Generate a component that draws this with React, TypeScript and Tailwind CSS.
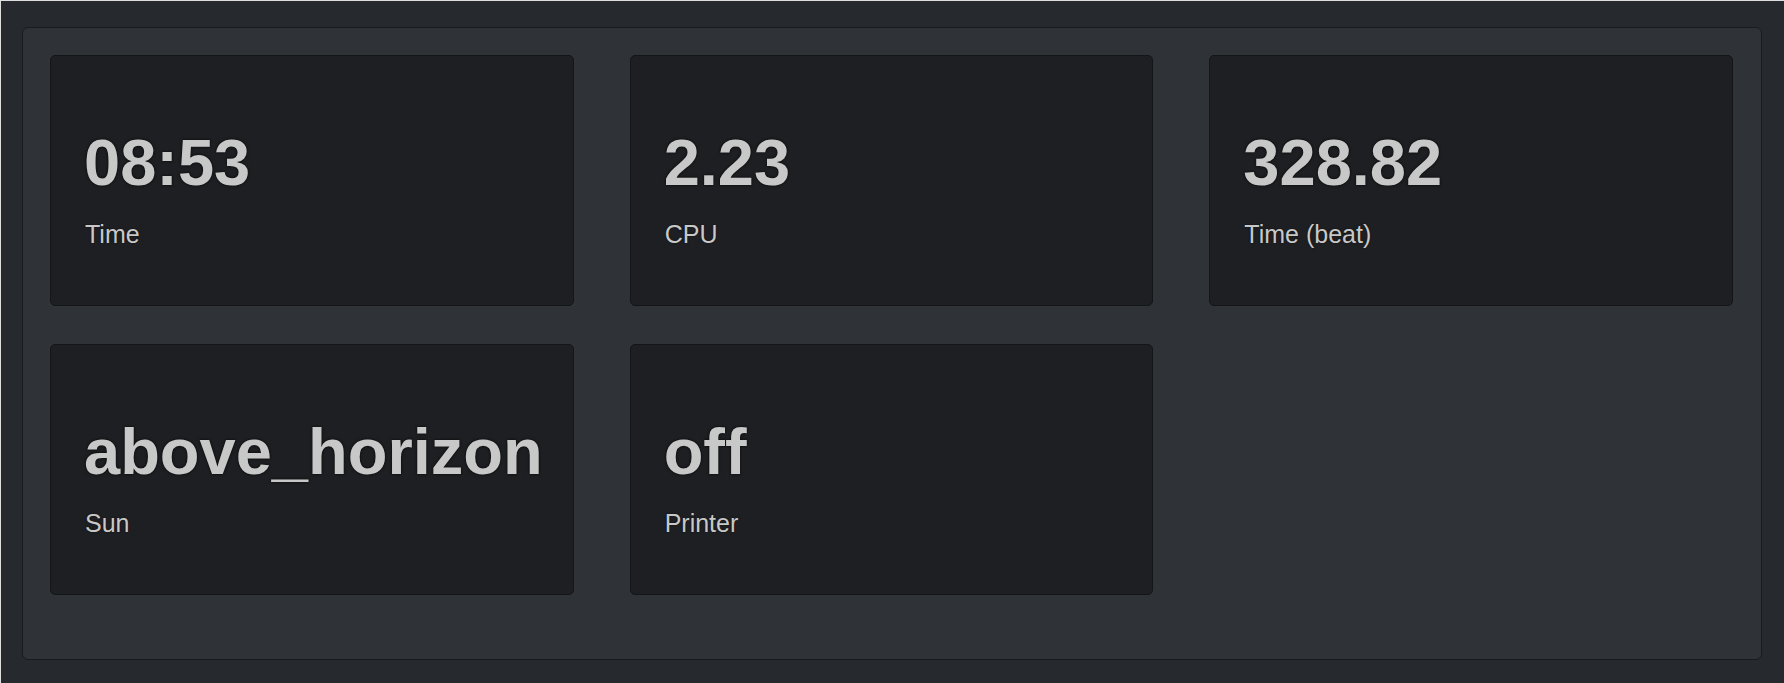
const tiles = [
  { value: '08:53', label: 'Time' },
  { value: '2.23', label: 'CPU' },
  { value: '328.82', label: 'Time (beat)' },
  { value: 'above_horizon', label: 'Sun' },
  { value: 'off', label: 'Printer' },
];

export default function App() {
  return (
    <div className="h-[683px] w-[1784px] flex flex-col border-l border-t border-[#dedede] bg-[#26292d] pl-[21px] pr-[22px] pt-[26px] pb-[23px] font-['Liberation_Sans',Arial,sans-serif]">
      <div className="flex-1 rounded-[6px] border border-[#191b1d] bg-[#2f3337] pl-[27px] pr-[28px] pt-[27px]">
        <div className="grid grid-cols-3 gap-x-[56px] gap-y-[38px]">
          {tiles.map((tile) => (
            <div
              key={tile.label}
              className="h-[251px] rounded-[5px] border border-[#141517] bg-[#1e1f22] pl-[33px] pt-[74px] text-[#c8c8c8]"
            >
              <div className="text-[65px] font-bold leading-none [text-shadow:0_0_3px_rgba(0,0,0,0.9)]">
                {tile.value}
              </div>
              <div className="mt-[27px] pl-[1px] text-[25px] leading-none [text-shadow:0_0_2px_rgba(0,0,0,0.6)]">
                {tile.label}
              </div>
            </div>
          ))}
        </div>
      </div>
    </div>
  );
}
